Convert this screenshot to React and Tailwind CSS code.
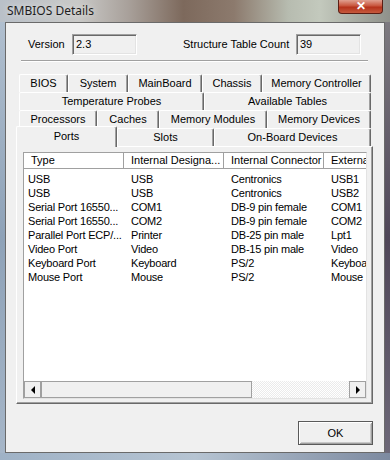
import React from "react";

const rows = [
  ["USB", "USB", "Centronics", "USB1"],
  ["USB", "USB", "Centronics", "USB2"],
  ["Serial Port 16550...", "COM1", "DB-9 pin female", "COM1"],
  ["Serial Port 16550...", "COM2", "DB-9 pin female", "COM2"],
  ["Parallel Port ECP/...", "Printer", "DB-25 pin male", "Lpt1"],
  ["Video Port", "Video", "DB-15 pin male", "Video"],
  ["Keyboard Port", "Keyboard", "PS/2", "Keyboard"],
  ["Mouse Port", "Mouse", "PS/2", "Mouse"],
];

const tabRows = [
  [["BIOS", 49], ["System", 60], ["MainBoard", 74], ["Chassis", 60], ["Memory Controller", 109]],
  [["Temperature Probes", 185], ["Available Tables", 167]],
  [["Processors", 78], ["Caches", 62], ["Memory Modules", 108], ["Memory Devices", 104]],
];

const Tab = ({ label, width }) => (
  <div
    className="h-[18px] flex items-center justify-center rounded-t-[2px] border-t border-l border-r border-t-white border-l-white border-r-[#696969] shadow-[inset_-1px_0_0_#a0a0a0] bg-[#f0f0f0]"
    style={{ width }}
  >
    {label}
  </div>
);

const Field = ({ value }) => (
  <div className="w-[65px] h-[21px] bg-[#f0f0f0] border border-t-[#a0a0a0] border-l-[#a0a0a0] border-r-white border-b-white shadow-[inset_1px_1px_0_#696969,inset_-1px_-1px_0_#e3e3e3] pl-[3px] flex items-center">
    {value}
  </div>
);

export default function App() {
  return (
    <div className="w-[390px] h-[460px] overflow-hidden flex flex-col bg-[#8ea2b6] font-['Liberation_Sans',Arial,sans-serif] text-[11px] text-black">
      {/* Title bar */}
      <div className="h-[22px] flex justify-between bg-[linear-gradient(to_right,#b9c0c8,#c9c9c7_20%,#a8a09a_33%,#7d695c_47%,#8c7a6d_60%,#b7bcb0_74%,#c3c9bd_82%,#8f918b_100%)]">
        <div className="pl-[7px] pt-[3px] text-[12px] text-[#1e1e1e] font-['Noto_Sans',sans-serif] leading-[16px] [text-shadow:0_0_6px_rgba(255,255,255,0.7)]">
          SMBIOS Details
        </div>
        <div className="mr-[7px] w-[45px] h-[14px] rounded-b-[4px] border border-t-0 border-[#5b1e14] bg-[linear-gradient(to_bottom,#e0a090,#c8553d_45%,#b5321b_55%,#c65a3e)] flex items-center justify-center text-white text-[12px] font-bold leading-none pb-[1px]">
          ✕
        </div>
      </div>

      <div className="flex flex-1">
        {/* left frame */}
        <div className="w-[5px] bg-[linear-gradient(to_bottom,#b0bfcf,#8ea2b8_50%,#a6b6c8)]" />

        {/* client area */}
        <div className="w-[380px] h-[431px] border border-[#6a6a6a] bg-[#f0f0f0] flex flex-col">
          {/* version row */}
          <div className="mt-[11px] flex items-center">
            <span className="ml-[22px] w-[44px]">Version</span>
            <Field value="2.3" />
            <span className="ml-[46px] w-[113px]">Structure Table Count</span>
            <Field value="39" />
          </div>
          <div className="mt-[5px] ml-[15px] w-[347px] h-[2px] border-t border-[#a0a0a0] border-b border-b-white" />

          {/* tabs */}
          <div className="mt-[12px] ml-[10px] flex flex-col">
            {tabRows.map((r, i) => (
              <div key={i} className="flex ml-[3px]">
                {r.map(([label, w]) => (
                  <Tab key={label} label={label} width={w} />
                ))}
              </div>
            ))}
            <div className="flex items-end h-[18px]">
              <div className="relative z-10 -mb-[1px] w-[101px] h-[21px] pb-[2px] flex items-center justify-center rounded-t-[2px] border-t border-l border-r border-t-white border-l-white border-r-[#696969] shadow-[inset_-1px_0_0_#a0a0a0] bg-[#f0f0f0]">
                Ports
              </div>
              <Tab label="Slots" width={97} />
              <Tab label="On-Board Devices" width={157} />
            </div>

            {/* panel */}
            <div className="w-[357px] h-[258px] border border-t-white border-l-white border-r-[#696969] border-b-[#696969] shadow-[inset_-1px_-1px_0_#a0a0a0] flex flex-col">
              <div className="mt-[5px] ml-[6px] w-[344px] h-[247px] border border-t-[#a0a0a0] border-l-[#a0a0a0] border-r-[#e3e3e3] border-b-[#e3e3e3] bg-white flex flex-col overflow-hidden">
                {/* header */}
                <div className="h-[16px] flex shrink-0 border-b border-[#a0a0a0] bg-white">
                  {["Type", "Internal Designa...", "Internal Connector", "Externa"].map((h) => (
                    <div
                      key={h}
                      className="w-[100px] shrink-0 pl-[7px] border-r border-[#a0a0a0] flex items-center whitespace-nowrap overflow-hidden"
                    >
                      {h}
                    </div>
                  ))}
                </div>
                {/* rows */}
                <div className="flex-1 pt-[3px] overflow-hidden tracking-[-0.2px]">
                  {rows.map((r, i) => (
                    <div key={i} className="h-[14px] flex items-center leading-[14px]">
                      {r.map((c, j) => (
                        <div
                          key={j}
                          className={`w-[100px] shrink-0 whitespace-nowrap overflow-hidden ${j === 0 ? "pl-[4px]" : "pl-[7px]"}`}
                        >
                          {c}
                        </div>
                      ))}
                    </div>
                  ))}
                </div>
                {/* scrollbar */}
                <div className="h-[17px] flex shrink-0">
                  <div className="w-[17px] border border-[#a0a0a0] bg-[#f0f0f0] flex items-center justify-center">
                    <div className="w-0 h-0 border-y-[4px] border-y-transparent border-r-[4px] border-r-black" />
                  </div>
                  <div className="w-[211px] border border-[#a0a0a0] bg-[#f0f0f0]" />
                  <div className="w-[97px] bg-[repeating-conic-gradient(#ffffff_0_25%,#ebebeb_0_50%)] bg-[length:2px_2px]" />
                  <div className="w-[17px] border border-[#a0a0a0] bg-[#f0f0f0] flex items-center justify-center">
                    <div className="w-0 h-0 border-y-[4px] border-y-transparent border-l-[4px] border-l-black" />
                  </div>
                </div>
              </div>
            </div>
          </div>

          {/* OK */}
          <div className="mt-[17px] ml-[292px] w-[75px] h-[24px] border border-[#5a5a5a] bg-[#f0f0f0] shadow-[inset_1px_1px_0_#ffffff,inset_-1px_-1px_0_#a0a0a0,inset_2px_2px_0_#f0f0f0,inset_-2px_-2px_0_#c8c8c8] flex items-center justify-center">
            OK
          </div>
        </div>

        {/* right frame */}
        <div className="w-[5px] bg-[linear-gradient(to_bottom,#7d7a80,#4f4658_50%,#6d6878)]" />
      </div>
      <div className="h-[7px] bg-[linear-gradient(to_right,#9fb2c6,#b6c4d2_50%,#7d8aa0)]" />
    </div>
  );
}
